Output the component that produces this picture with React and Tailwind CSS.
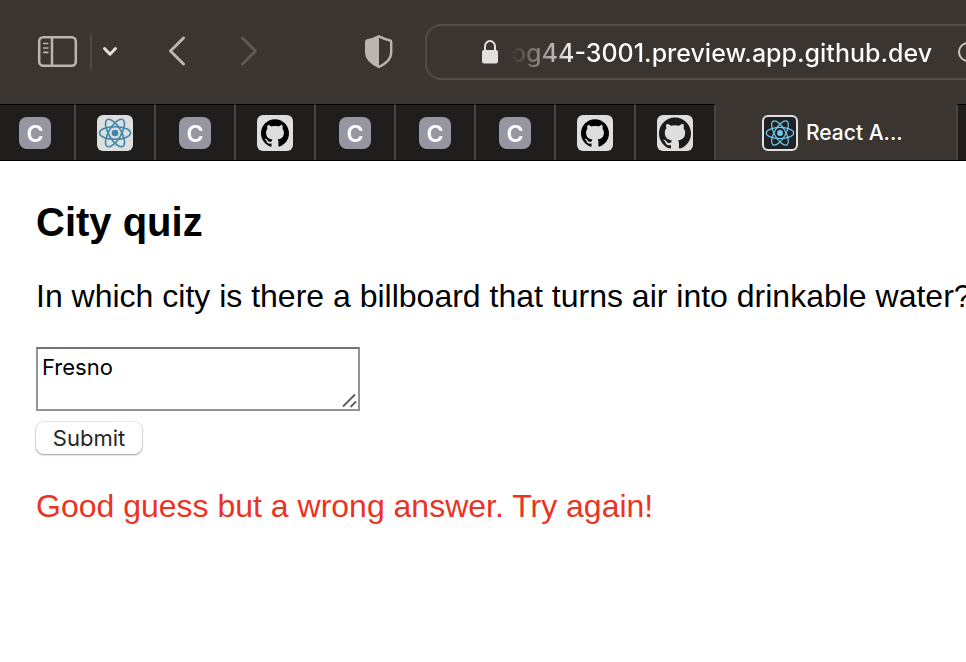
import { useState } from "react";
import { SiGithub } from "react-icons/si";

function ReactLogo({ className, strokeWidth }) {
  return (
    <svg viewBox="-16 -16 32 32" className={className} fill="none" stroke="currentColor" strokeWidth={strokeWidth} aria-hidden="true">
      <circle r="3.1" fill="currentColor" stroke="none" />
      <ellipse rx="14.6" ry="5.9" />
      <ellipse rx="14.6" ry="5.9" transform="rotate(60)" />
      <ellipse rx="14.6" ry="5.9" transform="rotate(120)" />
    </svg>
  );
}

function LetterIcon() {
  return (
    <span className="flex size-8 items-center justify-center rounded-lg bg-[#9696a3] pt-0.5 text-[23px] leading-7 font-semibold text-white">
      C
    </span>
  );
}

function ReactIcon() {
  return (
    <span className="flex size-9 items-center justify-center rounded-md bg-[#dedede] text-[#3d87ab]">
      <ReactLogo className="size-[34px]" strokeWidth={1.5} />
    </span>
  );
}

function GithubIcon() {
  return (
    <span className="flex size-9 items-center justify-center rounded-md bg-[#dedede] text-black">
      <SiGithub className="size-7" />
    </span>
  );
}

function GithubLargeIcon() {
  return (
    <span className="flex size-9 items-center justify-center rounded-md bg-[#dedede] text-[#1b1b1b]">
      <SiGithub className="size-8" />
    </span>
  );
}

const tabs = [
  { label: "C", Icon: LetterIcon },
  { label: "React", Icon: ReactIcon },
  { label: "C", Icon: LetterIcon },
  { label: "GitHub", Icon: GithubIcon },
  { label: "C", Icon: LetterIcon },
  { label: "C", Icon: LetterIcon },
  { label: "C", Icon: LetterIcon },
  { label: "GitHub", Icon: GithubIcon },
  { label: "GitHub", Icon: GithubLargeIcon },
];

function Toolbar() {
  return (
    <div className="flex h-[104px] items-center">
      <button aria-label="Show sidebar" className="ml-9 shrink-0 text-[#bbb5b2]">
        <svg viewBox="0 0 42 34" className="h-[34px] w-[42px]" fill="none" stroke="currentColor" strokeWidth="2.5" strokeLinecap="round">
          <rect x="3.2" y="2.2" width="36.6" height="28.6" rx="4" />
          <path d="M16 2.5v28" />
          <path d="M7.7 8.5h4.2M7.7 13h4.2M7.7 17.400h4.2" strokeWidth="1.600" />
        </svg>
      </button>
      <span className="ml-3 h-9 w-0.5 shrink-0 bg-[#4d4845]" />
      <button aria-label="Tab groups" className="ml-2.5 shrink-0 text-[#e3dfdc]">
        <svg viewBox="0 0 16 12" className="h-3 w-4" fill="none" stroke="currentColor" strokeWidth="3" strokeLinecap="round" strokeLinejoin="round">
          <path d="M2.500 2.500L8 8.200L13.500 2.500" />
        </svg>
      </button>
      <button aria-label="Back" className="ml-12 shrink-0 text-[#bbb5b2]">
        <svg viewBox="0 0 22 32" className="h-8 w-[22px]" fill="none" stroke="currentColor" strokeWidth="3" strokeLinecap="round" strokeLinejoin="round">
          <path d="M17.500 2L4.500 15L17.500 28" />
        </svg>
      </button>
      <button aria-label="Forward" disabled className="ml-12 shrink-0 text-[#5f5a57]">
        <svg viewBox="0 0 26 32" className="h-8 w-[26px]" fill="none" stroke="currentColor" strokeWidth="3" strokeLinecap="round" strokeLinejoin="round">
          <path d="M6.500 2L19.500 15L6.500 28" />
        </svg>
      </button>
      <button aria-label="Privacy report" className="ml-[102px] shrink-0 text-[#bbb5b2]">
        <svg viewBox="0 0 30 36" className="h-9 w-[30px]" fill="none" stroke="currentColor" strokeWidth="2.400" strokeLinejoin="round">
          <path d="M15 2.400C11 4.500 7 5.700 3.200 6.500C2.500 6.700 2.200 7 2.200 8V19C2.200 25.500 8 29.500 15 33C22 29.500 27.200 25.500 27.200 19V8C27.200 7 26.800 6.700 26.200 6.500C22.500 5.700 19 4.500 15 2.400Z" />
          <path d="M15 2.400C11 4.500 7 5.700 3.200 6.500C2.500 6.700 2.200 7 2.200 8V19C2.200 25.500 8 29.500 15 33Z" fill="currentColor" stroke="none" />
        </svg>
      </button>
      <div className="ml-[31px] flex h-14 min-w-0 flex-1 items-center overflow-hidden rounded-l-2xl border-2 border-r-0 border-[#524d4a] pl-[54px]">
        <svg viewBox="0 0 18 26" className="h-[26px] w-[18px] shrink-0" fill="none" aria-hidden="true">
          <rect x="1" y="11" width="16" height="13.500" rx="2" fill="#e2e0df" />
          <path d="M4 12V7.500A5 5.500 0 0 1 14 7.500V12" stroke="#e2e0df" strokeWidth="2" />
        </svg>
        <span className="ml-3 shrink-0 bg-linear-to-r from-[#3b3532] to-white to-[64px] bg-clip-text pt-0.5 text-[25px] leading-9 font-medium text-transparent">
          og44-3001.preview.app.github.dev
        </span>
        <button aria-label="Reload" className="ml-6 shrink-0 text-[#c8c4c2]">
          <svg viewBox="0 0 24 24" className="size-6" fill="none" stroke="currentColor" strokeWidth="2">
            <circle cx="12" cy="12" r="9" />
          </svg>
        </button>
      </div>
    </div>
  );
}

function TabBar() {
  return (
    <div className="flex h-[57px] overflow-hidden border-b border-black">
      {tabs.map(({ label, Icon }, i) => (
        <button
          key={i}
          aria-label={label}
          className="flex w-20 shrink-0 items-center justify-center border-t border-r-2 border-t-black border-r-[#4a4342] bg-[#1f1e1c] first:w-[76px] first:pr-1"
        >
          <Icon />
        </button>
      ))}
      <button className="flex w-60 shrink-0 items-center pt-px pl-[46px] text-[21px] leading-7 font-medium text-white">
        <span className="mr-2 flex size-9 items-center justify-center rounded-md border-2 border-[#e0e0e0] bg-[#202124] text-[#6fcbee]">
          <ReactLogo className="size-[30px]" strokeWidth={1.3} />
        </span>
        React A...
      </button>
      <span className="flex-1 border-t border-l-2 border-t-black border-l-[#4a4342] bg-[#1f1e1c]" />
    </div>
  );
}

export default function App() {
  const [answer, setAnswer] = useState("Fresno");
  return (
    <div className="min-h-screen overflow-hidden bg-white text-black">
      <header className="bg-[#3b3532] font-[Inter,sans-serif]">
        <Toolbar />
        <TabBar />
      </header>
      <main className="px-9 pt-[35px] font-['Liberation_Sans',Arial,sans-serif]">
        <h2 className="text-[40px] leading-[52px] font-bold">City quiz</h2>
        <p id="question" className="mt-7 text-[32px] leading-10 whitespace-nowrap">
          In which city is there a billboard that turns air into drinkable water?
        </p>
        <form className="mt-[31px] font-[Inter,sans-serif]" onSubmit={(e) => e.preventDefault()}>
          <div className="relative h-16 w-[324px]">
            <textarea
              aria-labelledby="question"
              value={answer}
              onChange={(e) => setAnswer(e.target.value)}
              className="block size-full resize-none border-2 border-[#949494] border-t-[#737373] px-1 py-1 text-[22px] leading-7 outline-none"
            />
            <svg viewBox="0 0 16 16" className="pointer-events-none absolute right-0.5 bottom-0.5 size-4" stroke="#5c5c5c" strokeWidth="1.800" aria-hidden="true">
              <path d="M1 13.500L13 1.500M8.500 14L14 8.500" />
            </svg>
          </div>
          <button className="mt-[11px] block h-8 w-[106px] rounded-lg bg-white text-[22px] leading-8 text-[#262626] shadow-[0_0_0_1px_rgba(0,0,0,0.08),0_1px_2px_rgba(0,0,0,0.35)]">
            Submit
          </button>
        </form>
        <p className="mt-8 text-[32px] leading-10 whitespace-nowrap text-[#eb3323]">
          Good guess but a wrong answer. Try again!
        </p>
      </main>
    </div>
  );
}
